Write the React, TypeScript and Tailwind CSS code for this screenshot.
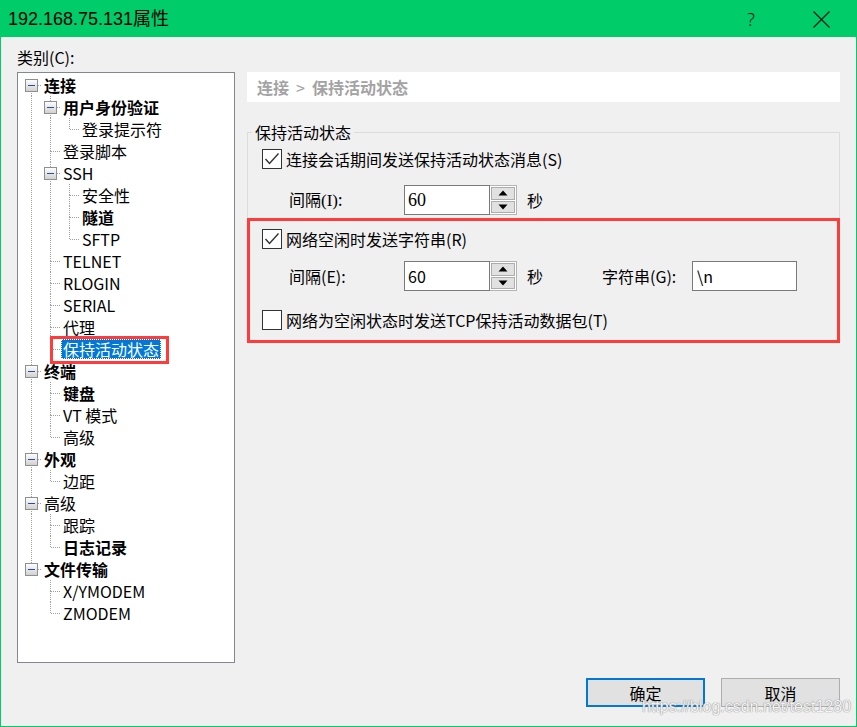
import React from 'react';

type TNode = { label: string; bold?: boolean; selected?: boolean; children?: TNode[] };

const tree: TNode[] = [
  {
    label: '连接',
    bold: true,
    children: [
      { label: '用户身份验证', bold: true, children: [{ label: '登录提示符' }] },
      { label: '登录脚本' },
      { label: 'SSH', children: [{ label: '安全性' }, { label: '隧道', bold: true }, { label: 'SFTP' }] },
      { label: 'TELNET' },
      { label: 'RLOGIN' },
      { label: 'SERIAL' },
      { label: '代理' },
      { label: '保持活动状态', selected: true },
    ],
  },
  { label: '终端', bold: true, children: [{ label: '键盘', bold: true }, { label: 'VT 模式' }, { label: '高级' }] },
  { label: '外观', bold: true, children: [{ label: '边距' }] },
  { label: '高级', children: [{ label: '跟踪' }, { label: '日志记录', bold: true }] },
  { label: '文件传输', bold: true, children: [{ label: 'X/YMODEM' }, { label: 'ZMODEM' }] },
];

type Row = {
  node: TNode;
  depth: number;
  continues: boolean[];
  isLast: boolean;
  isFirstRoot: boolean;
  hasChildren: boolean;
};

function flatten(nodes: TNode[], depth: number, continues: boolean[], out: Row[]) {
  nodes.forEach((n, i) => {
    const isLast = i === nodes.length - 1;
    out.push({
      node: n,
      depth,
      continues,
      isLast,
      isFirstRoot: depth === 0 && i === 0,
      hasChildren: !!(n.children && n.children.length),
    });
    if (n.children) flatten(n.children, depth + 1, [...continues, !isLast], out);
  });
}

const rows: Row[] = [];
flatten(tree, 0, [], rows);

const DOT = { stroke: '#a0a0a0', strokeWidth: 1, strokeDasharray: '1 1', shapeRendering: 'crispEdges' as const };

function LineCell({
  full,
  top,
  bottom,
  horiz,
  box,
}: {
  full?: boolean;
  top?: boolean;
  bottom?: boolean;
  horiz?: boolean;
  box?: boolean;
}) {
  return (
    <svg width="19" height="22" className="block shrink-0">
      <defs>
        <linearGradient id="tvbox" x1="0" y1="0" x2="0" y2="1">
          <stop offset="0" stopColor="#ffffff" />
          <stop offset="1" stopColor="#cfcfcf" />
        </linearGradient>
      </defs>
      {full && <line x1="9.5" y1="0" x2="9.5" y2="22" {...DOT} />}
      {top && <line x1="9.5" y1="0" x2="9.5" y2="11" {...DOT} />}
      {bottom && <line x1="9.5" y1="11" x2="9.5" y2="22" {...DOT} />}
      {horiz && <line x1="10" y1="11.5" x2="19" y2="11.5" {...DOT} />}
      {box && (
        <g>
          <rect x="3.5" y="5.5" width="12" height="12" fill="url(#tvbox)" stroke="#8f8f8f" shapeRendering="crispEdges" />
          <line x1="6" y1="11.5" x2="13" y2="11.5" stroke="#2d4c9c" strokeWidth="1" shapeRendering="crispEdges" />
        </g>
      )}
    </svg>
  );
}

function TreeRow({ row }: { row: Row }) {
  const cells = [];
  for (let k = 0; k < row.depth; k++) {
    cells.push(<LineCell key={k} full={row.continues[k]} />);
  }
  cells.push(
    <LineCell
      key="own"
      top={!row.isFirstRoot}
      bottom={!row.isLast}
      horiz
      box={row.hasChildren}
    />
  );
  const n = row.node;
  return (
    <div className="flex h-[22px] items-center">
      {cells}
      {n.selected ? (
        <span className="relative ml-[1px]">
          <span className="block h-[20px] bg-[#0078d7] px-[2px] text-[16px] leading-[20px] text-white outline-1 outline-dotted outline-offset-[-1px] outline-[#ffffff]">
            {n.label}
          </span>
          <span className="pointer-events-none absolute left-[-11px] top-[-3px] right-[-8px] bottom-[-5px] border-[3px] border-[#ff3b3b]" />
        </span>
      ) : (
        <span
          className={
            'ml-[1px] h-[20px] px-[2px] text-[16px] leading-[20px] text-black ' + (n.bold ? 'font-bold' : 'font-normal')
          }
        >
          {n.label}
        </span>
      )}
    </div>
  );
}

function Checkbox({ checked }: { checked?: boolean }) {
  return (
    <span className="flex h-[20px] w-[20px] shrink-0 items-center justify-center border border-[#333333] bg-white">
      {checked && (
        <svg width="16" height="14" viewBox="0 0 16 14">
          <polyline points="1.5,7 5.5,11.5 14.5,1.5" fill="none" stroke="#333333" strokeWidth="1.4" />
        </svg>
      )}
    </span>
  );
}

function Spin({ value, serif }: { value: string; serif?: boolean }) {
  return (
    <div className="flex h-[30px]">
      <div
        className={
          'flex h-[30px] w-[86px] items-center border border-[#7a7a7a] bg-white pl-[3px] text-black ' +
          (serif
            ? 'font-[family-name:Liberation_Serif,serif] text-[18px]'
            : 'text-[16px]')
        }
      >
        {value}
      </div>
      <div className="flex h-[30px] w-[27px] flex-col gap-[1px] border-y border-r border-[#b4b4b4] bg-white p-[1px]">
        <div className="flex flex-1 items-center justify-center border border-[#adadad] bg-[#e1e1e1]">
          <svg width="10" height="6" viewBox="0 0 10 6">
            <polygon points="5,0.5 9.5,5.5 0.5,5.5" fill="#000" />
          </svg>
        </div>
        <div className="flex flex-1 items-center justify-center border border-[#adadad] bg-[#e1e1e1]">
          <svg width="10" height="6" viewBox="0 0 10 6">
            <polygon points="0.5,0.5 9.5,0.5 5,5.5" fill="#000" />
          </svg>
        </div>
      </div>
    </div>
  );
}

export default function App() {
  return (
    <div className="relative flex h-[727px] w-[857px] flex-col overflow-hidden border border-[#00cc6a] bg-[#f0f0f0] font-[family-name:Noto_Sans_CJK_SC,sans-serif] text-black">
      {/* Title bar */}
      <div className="flex h-[36px] shrink-0 items-center bg-[#00cc6a] pl-[7px] pr-[12px]">
        <span className="font-[family-name:Liberation_Sans,Noto_Sans_CJK_SC,sans-serif] text-[18px] leading-[24px] text-black">
          192.168.75.131属性
        </span>
        <div className="ml-auto flex items-center gap-[24px]">
          <span className="flex w-[46px] justify-center font-[family-name:Noto_Sans,sans-serif] text-[18px] font-light leading-[24px] text-[#111]">
            ?
          </span>
          <span className="flex w-[46px] justify-center">
            <svg width="17" height="17" viewBox="0 0 17 17">
              <line x1="0.5" y1="0.5" x2="16.5" y2="16.5" stroke="#111" strokeWidth="1.1" />
              <line x1="16.5" y1="0.5" x2="0.5" y2="16.5" stroke="#111" strokeWidth="1.1" />
            </svg>
          </span>
        </div>
      </div>

      {/* Main content */}
      <div className="flex gap-[12px] pl-[16px] pr-[16px]">
        <div className="flex w-[218px] shrink-0 flex-col">
          <div className="h-[35px] pt-[10px] text-[16px] leading-[20px]">类别(C):</div>
          <div className="h-[591px] border border-[#828790] bg-white pl-[4px] pt-[1px]">
            {rows.map((r, i) => (
              <TreeRow key={i} row={r} />
            ))}
          </div>
        </div>

        <div className="flex min-w-0 flex-1 flex-col pt-[35px]">
          <div className="flex h-[30px] items-center bg-white pl-[10px] text-[16px] font-bold text-[#a3a3a3]">
            连接<span className="mx-[7px] font-normal">&gt;</span>保持活动状态
          </div>

          <fieldset className="mt-[20px] border border-b-0 border-[#dcdcdc] p-0">
            <legend className="ml-[4px] px-[3px] text-[16px] leading-[20px]">保持活动状态</legend>
            <div className="pl-[14px] pt-[7px]">
              <div className="flex h-[20px] items-center gap-[4px]">
                <Checkbox checked />
                <span className="text-[16px] leading-[20px]">连接会话期间发送保持活动状态消息(S)</span>
              </div>
              <div className="mt-[16px] flex items-center">
                <span className="w-[142px] pl-[27px] text-[16px] leading-[20px]">
                  间隔<span className="font-[family-name:Liberation_Serif,serif] text-[17px]">(I)</span>:
                </span>
                <Spin value="60" serif />
                <span className="ml-[10px] text-[16px] leading-[20px]">秒</span>
              </div>
            </div>

            <div className="-mx-px mt-[3px] border-[3px] border-[#ff3b3b] pb-[10px] pl-[12px] pt-[8px]">
              <div className="flex h-[20px] items-center gap-[4px]">
                <Checkbox checked />
                <span className="text-[16px] leading-[20px]">网络空闲时发送字符串(R)</span>
              </div>
              <div className="mt-[12px] flex items-center">
                <span className="w-[142px] pl-[27px] text-[16px] leading-[20px]">间隔(E):</span>
                <Spin value="60" />
                <span className="ml-[10px] w-[16px] text-[16px] leading-[20px]">秒</span>
                <span className="ml-[59px] w-[90px] text-[16px] leading-[20px]">字符串(G):</span>
                <div className="flex h-[30px] w-[105px] items-center border border-[#7a7a7a] bg-white pl-[4px] text-[16px]">
                  \n
                </div>
              </div>
              <div className="mt-[19px] flex h-[20px] items-center gap-[4px]">
                <Checkbox />
                <span className="text-[16px] leading-[20px]">网络为空闲状态时发送TCP保持活动数据包(T)</span>
              </div>
            </div>
          </fieldset>
        </div>
      </div>

      {/* Buttons */}
      <div className="mt-[15px] flex justify-end gap-[16px] pr-[16px]">
        <button className="flex h-[29px] w-[119px] items-center justify-center border-2 border-[#0078d7] bg-[#e1e1e1] text-[16px] text-black">
          确定
        </button>
        <button className="flex h-[29px] w-[119px] items-center justify-center border border-[#adadad] bg-[#e1e1e1] text-[16px] text-black">
          取消
        </button>
      </div>

      {/* Watermark */}
      <div className="pointer-events-none absolute left-[641px] top-[696px] font-[family-name:Liberation_Sans,sans-serif] text-[16px] leading-[20px] text-white/90 [text-shadow:0_0_1px_#8a8a8a,0_0_1px_#8a8a8a]">
        https://blog.csdn.net/test1280
      </div>
    </div>
  );
}
